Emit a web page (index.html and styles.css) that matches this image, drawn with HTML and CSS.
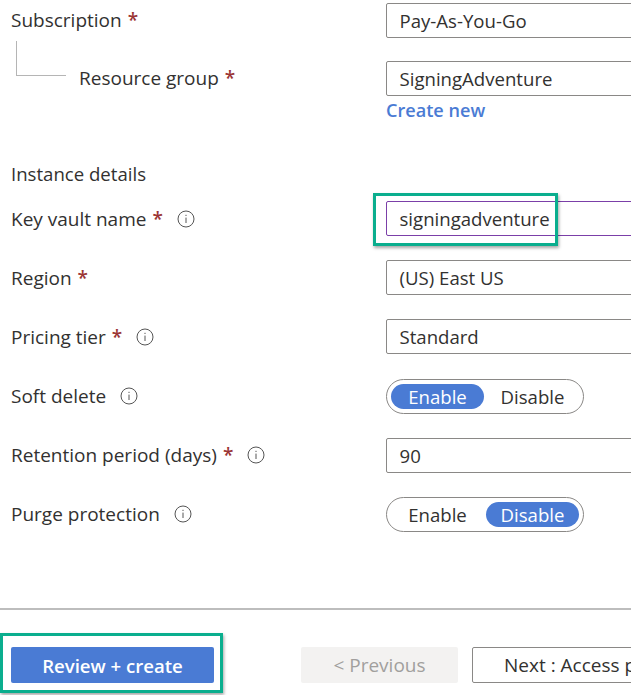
FILE: index.html
```html
<!DOCTYPE html>
<html lang="en">
<head>
<meta charset="utf-8">
<title>Create key vault</title>
<link rel="stylesheet" href="styles.css">
</head>
<body>
<main class="page">
  <section class="form">
    <div class="row row-first">
      <div class="label">Subscription <span class="req">*</span></div>
      <div class="input">Pay-As-You-Go</div>
    </div>
    <div class="row row-nested">
      <div class="label label-nested"><span class="connector"></span>Resource group <span class="req">*</span></div>
      <div class="input">SigningAdventure</div>
    </div>
    <a class="create-new">Create new</a>
    <h2 class="heading">Instance details</h2>
    <div class="row">
      <div class="label">Key vault name <span class="req">*</span>
        <svg class="info" viewBox="0 0 18 18"><circle cx="9" cy="9" r="8" fill="none" stroke="#555" stroke-width="1"/><path d="M9 7.6v5.4M9 4.8v1.2" stroke="#555" stroke-width="1" fill="none"/></svg>
      </div>
      <div class="input input-focus">signingadventure<span class="highlight highlight-name"></span></div>
    </div>
    <div class="row">
      <div class="label">Region <span class="req">*</span></div>
      <div class="input">(US) East US</div>
    </div>
    <div class="row">
      <div class="label">Pricing tier <span class="req">*</span>
        <svg class="info" viewBox="0 0 18 18"><circle cx="9" cy="9" r="8" fill="none" stroke="#555" stroke-width="1"/><path d="M9 7.6v5.4M9 4.8v1.2" stroke="#555" stroke-width="1" fill="none"/></svg>
      </div>
      <div class="input">Standard</div>
    </div>
    <div class="row">
      <div class="label">Soft delete
        <svg class="info" viewBox="0 0 18 18"><circle cx="9" cy="9" r="8" fill="none" stroke="#555" stroke-width="1"/><path d="M9 7.6v5.4M9 4.8v1.2" stroke="#555" stroke-width="1" fill="none"/></svg>
      </div>
      <div class="toggle"><span class="opt opt-on">Enable</span><span class="opt">Disable</span></div>
    </div>
    <div class="row">
      <div class="label">Retention period (days) <span class="req">*</span>
        <svg class="info" viewBox="0 0 18 18"><circle cx="9" cy="9" r="8" fill="none" stroke="#555" stroke-width="1"/><path d="M9 7.6v5.4M9 4.8v1.2" stroke="#555" stroke-width="1" fill="none"/></svg>
      </div>
      <div class="input">90</div>
    </div>
    <div class="row">
      <div class="label">Purge protection
        <svg class="info" viewBox="0 0 18 18"><circle cx="9" cy="9" r="8" fill="none" stroke="#555" stroke-width="1"/><path d="M9 7.6v5.4M9 4.8v1.2" stroke="#555" stroke-width="1" fill="none"/></svg>
      </div>
      <div class="toggle"><span class="opt">Enable</span><span class="opt opt-on">Disable</span></div>
    </div>
  </section>
  <footer class="footer">
    <button class="btn btn-primary">Review + create<span class="highlight highlight-review"></span></button>
    <button class="btn btn-disabled">&lt; Previous</button>
    <button class="btn btn-next">Next : Access policy &gt;</button>
  </footer>
</main>
</body>
</html>
```
FILE: styles.css
```css
* { box-sizing: border-box; }
html, body { margin: 0; padding: 0; }
body {
  width: 631px;
  height: 695px;
  overflow: hidden;
  background: #fff;
  font-family: "Open Sans", "Noto Sans", sans-serif;
  font-size: 19px;
  color: #323130;
}
.page { display: flex; flex-direction: column; height: 695px; }
.form {
  display: flex;
  flex-direction: column;
  padding: 3px 0 0 11px;
  height: 605px;
}
.row {
  display: flex;
  align-items: center;
  height: 35px;
  margin-bottom: 24.2px;
  flex: none;
}
.row-first { margin-bottom: 23px; }
.row-nested { margin-bottom: 2px; }
.label {
  width: 375px;
  flex: none;
  display: flex;
  align-items: center;
  white-space: nowrap;
  position: relative;
}
.row-first .label, .row-nested .label { top: -1px; }
.label-nested { padding-left: 68px; }
.connector {
  position: absolute;
  left: 5px;
  top: -24px;
  width: 50px;
  height: 35px;
  border-left: 1.5px solid #b5b5b5;
  border-bottom: 1.5px solid #b5b5b5;
}
.req { color: #9b3535; font-weight: 600; margin-left: 6px; }
.info { width: 18px; height: 18px; margin-left: 14px; flex: none; }
.input {
  position: relative;
  flex: none;
  width: 300px;
  height: 35px;
  border: 1.5px solid #8a8886;
  border-radius: 2px;
  padding-left: 12.5px;
  display: flex;
  align-items: center;
  white-space: nowrap;
  font-size: 18.6px;
}
.input-focus { border-color: #7b3fa8; }
.create-new { color: #4a7bd4; font-weight: 600; line-height: 24px; margin-left: 375px; height: 64px; font-size: 18.1px; }
.heading { margin: 0; font-size: 18.6px; font-weight: 400; line-height: 24px; height: 39px; }
.highlight {
  position: absolute;
  border: 3px solid #0aae8e;
  box-shadow: 1px 2px 3px rgba(0, 0, 0, 0.35);
  pointer-events: none;
}
.highlight-name { left: -14px; top: -9px; width: 185px; height: 53px; }
.highlight-review { left: -11px; top: -14px; width: 223px; height: 60px; }
.toggle {
  flex: none;
  width: 198px;
  height: 35px;
  border: 1.5px solid #8a8886;
  border-radius: 18px;
  display: flex;
  align-items: center;
  gap: 2px;
  padding: 0 4px;
  font-size: 18.6px;
}
.opt {
  flex: 1;
  height: 25px;
  border-radius: 13px;
  display: flex;
  align-items: center;
  justify-content: center;
}
.opt-on { background: #4a7bd4; color: #fff; }
.footer {
  flex: 1;
  border-top: 2px solid #bdbdbd;
  margin-top: 3px;
  padding: 37px 0 0 11px;
  display: flex;
  gap: 14px;
  align-items: flex-start;
}
.btn {
  position: relative;
  flex: none;
  height: 36px;
  font: inherit;
  border-radius: 2px;
  white-space: nowrap;
  padding: 0;
}
.btn-primary { width: 203px; background: #4a7bd4; color: #fff; border: none; font-weight: 600; font-size: 18.6px; margin-right: 73px; }
.btn-disabled { width: 157px; background: #f3f2f1; color: #a19f9d; border: none; }
.btn-next { width: 220px; background: #fff; color: #323130; border: 1.5px solid #8a8886; text-align: left; padding-left: 31px; }
```
